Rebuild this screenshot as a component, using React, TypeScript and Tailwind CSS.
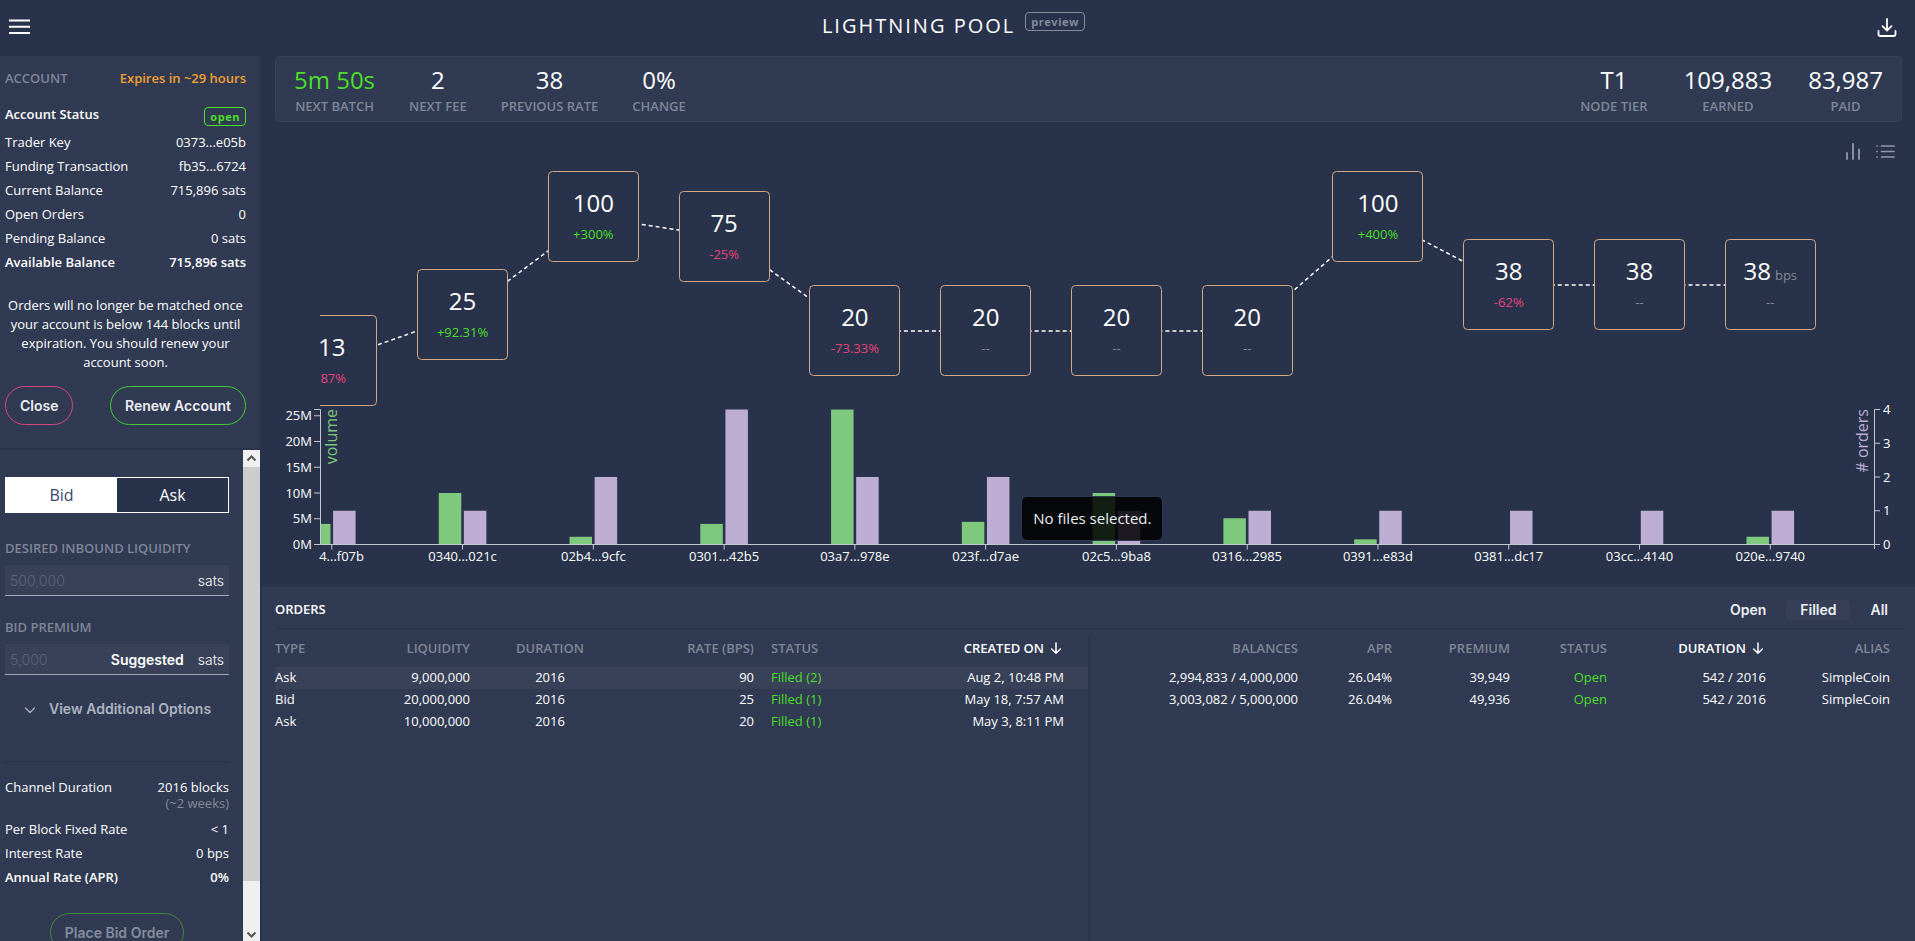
import type { ReactNode } from "react";

const SANS = "font-['Open_Sans','Noto_Sans',sans-serif]";
const WORK = "font-['Inter','Open_Sans',sans-serif]";

type Batch = {
  id: string;
  rate: number;
  pct: string;
  y: number;
  volume: number;
  orders: number;
  unit?: string;
};

const BATCHES: Batch[] = [
  { id: "4...f07b", rate: 13, pct: "87%", y: 361, volume: 4, orders: 1 },
  { id: "0340...021c", rate: 25, pct: "+92.31%", y: 315, volume: 10, orders: 1 },
  { id: "02b4...9cfc", rate: 100, pct: "+300%", y: 217, volume: 1.5, orders: 2 },
  { id: "0301...42b5", rate: 75, pct: "-25%", y: 237, volume: 4, orders: 4 },
  { id: "03a7...978e", rate: 20, pct: "-73.33%", y: 331, volume: 26.2, orders: 2 },
  { id: "023f...d7ae", rate: 20, pct: "--", y: 331, volume: 4.4, orders: 2 },
  { id: "02c5...9ba8", rate: 20, pct: "--", y: 331, volume: 10, orders: 1 },
  { id: "0316...2985", rate: 20, pct: "--", y: 331, volume: 5.1, orders: 1 },
  { id: "0391...e83d", rate: 100, pct: "+400%", y: 217, volume: 1, orders: 1 },
  { id: "0381...dc17", rate: 38, pct: "-62%", y: 285, volume: 0.1, orders: 1 },
  { id: "03cc...4140", rate: 38, pct: "--", y: 285, volume: 0.1, orders: 1 },
  { id: "020e...9740", rate: 38, pct: "--", y: 285, volume: 1.5, orders: 1, unit: "bps" },
];

const LEFT = 320.5;
const RIGHT = 1874.5;
const TOP = 409.5;
const BASE = 544.5;
const tickX = (i: number) => 331.8 + i * 130.77;

function pctColor(b: Batch) {
  if (b.pct === "--") return "#848a99";
  return b.pct.startsWith("+") ? "#4cdf28" : "#e8437a";
}

function BatchChart() {
  return (
    <svg viewBox="260 166 1655 421" className={`block w-full ${SANS}`} role="img" aria-label="Batch rates, volume and orders">
      <defs>
        <clipPath id="plot">
          <rect x={LEFT - 0.5} y="160" width={RIGHT - LEFT} height="440" />
        </clipPath>
      </defs>

      <g clipPath="url(#plot)">
        {BATCHES.slice(1).map((b, i) => (
          <line
            key={b.id}
            x1={tickX(i)}
            y1={BATCHES[i].y}
            x2={tickX(i + 1)}
            y2={b.y}
            stroke="#fff"
            strokeWidth="1.5"
            strokeDasharray="4 3"
          />
        ))}
        {BATCHES.map((b, i) => {
          const x = tickX(i);
          return (
            <g key={b.id}>
              <rect x={Math.floor(x - 45) + 0.5} y={b.y - 45.5} width="90" height="90" rx="4" fill="#28324a" stroke="#d2a984" strokeWidth="1" />
              <text x={x} y={b.y - 5} textAnchor="middle" fontSize="24" fill="#fff">
                {b.rate}
                {b.unit && (
                  <tspan fontSize="13" fill="#848a99" dx="4">
                    {b.unit}
                  </tspan>
                )}
              </text>
              <text x={i === 0 ? 346 : x} y={b.y + 22} textAnchor={i === 0 ? "end" : "middle"} fontSize="13" fill={pctColor(b)}>
                {b.pct}
              </text>
            </g>
          );
        })}
        {BATCHES.map((b, i) => {
          const x = tickX(i);
          const vh = b.volume * 5.15;
          const oh = b.orders * 33.75;
          return (
            <g key={b.id}>
              <rect x={x - 23.8} y={BASE - vh} width="22.5" height={vh} fill="#7fc97f" />
              <rect x={x + 1.3} y={BASE - oh} width="22.5" height={oh} fill="#beaed4" />
            </g>
          );
        })}
      </g>

      <g stroke="#c3c7d1" strokeWidth="1" fill="none">
        <path d={`M314 ${TOP}H${LEFT}V${BASE}H314`} />
        {[5, 10, 15, 20, 25].map((v) => (
          <path key={v} d={`M314 ${BASE - v * 5.15}H${LEFT}`} />
        ))}
        <path d={`M${LEFT} ${BASE}H${RIGHT}V549`} />
        <path d={`M1880 ${TOP}H${RIGHT}V${BASE}H1880`} />
        {[1, 2, 3].map((v) => (
          <path key={v} d={`M${RIGHT} ${BASE - v * 33.75}H1880`} />
        ))}
        {BATCHES.map((b, i) => (
          <path key={b.id} d={`M${tickX(i)} ${BASE}v5`} />
        ))}
      </g>

      <g fontSize="13" fill="#fff">
        {[0, 5, 10, 15, 20, 25].map((v) => (
          <text key={v} x="312" y={BASE + 4.5 - v * 5.15} textAnchor="end">
            {v}M
          </text>
        ))}
        {[0, 1, 2, 3, 4].map((v) => (
          <text key={v} x="1883" y={BASE + 4.5 - v * 33.75}>
            {v}
          </text>
        ))}
        {BATCHES.map((b, i) => (
          <text key={b.id} x={i === 0 ? 364 : tickX(i)} y="561" textAnchor={i === 0 ? "end" : "middle"}>
            {b.id}
          </text>
        ))}
      </g>
      <text transform="translate(337 409) rotate(-90)" textAnchor="end" fontSize="16" fill="#7fc97f">
        volume
      </text>
      <text transform="translate(1868 409) rotate(-90)" textAnchor="end" fontSize="16" fill="#beaed4">
        # orders
      </text>
    </svg>
  );
}

function Stat({ value, label, green }: { value: string; label: string; green?: boolean }) {
  return (
    <div className="text-center">
      <div className={green ? "text-2xl leading-8 text-[#4cdf28]" : "text-2xl leading-8 text-white"}>{value}</div>
      <div className="text-[13px] leading-5 font-semibold text-[#7f8697]">{label}</div>
    </div>
  );
}

function Row({ label, children, bold }: { label: string; children: ReactNode; bold?: boolean }) {
  return (
    <div className={bold ? "flex justify-between leading-6 font-semibold" : "flex justify-between leading-6"}>
      <dt>{label}</dt>
      <dd className="text-right">{children}</dd>
    </div>
  );
}

function SortArrow() {
  return (
    <svg viewBox="0 0 16 16" className="ml-1 inline-block size-4 align-[-3px]" fill="none" stroke="currentColor" strokeWidth="1.5" strokeLinecap="round" strokeLinejoin="round">
      <path d="M8 3v10M3.7 9 8 13.2 12.3 9" />
    </svg>
  );
}

function Sidebar() {
  return (
    <aside className="flex w-[260px] shrink-0 flex-col bg-[#303a52] text-[13px]">
      <section className="border-b-2 border-[#29334b] pt-3 pr-3.5 pb-[23px] pl-[5px]">
        <div className="flex justify-between leading-5 font-semibold">
          <h2 className="text-[#7f8697]">ACCOUNT</h2>
          <span className="text-[#f0a030]">Expires in ~29 hours</span>
        </div>
        <dl className="mt-[15px]">
          <div className="mb-[3px] flex h-6 items-center justify-between font-semibold">
            <dt>Account Status</dt>
            <dd className="mt-0.5 rounded border border-[#4cdf28] px-[5px] text-[11px] leading-[17px] font-bold tracking-wider text-[#4cdf28]">open</dd>
          </div>
          <Row label="Trader Key">0373...e05b</Row>
          <Row label="Funding Transaction">fb35...6724</Row>
          <Row label="Current Balance">715,896 sats</Row>
          <Row label="Open Orders">0</Row>
          <Row label="Pending Balance">0 sats</Row>
          <Row label="Available Balance" bold>
            715,896 sats
          </Row>
        </dl>
        <p className="mt-[22px] text-center leading-[19px]">
          Orders will no longer be matched once your account is below 144 blocks until expiration. You should renew your account soon.
        </p>
        <div className={`mt-3.5 flex justify-between text-sm font-semibold text-[#eceef2] ${WORK}`}>
          <button className="h-[39px] rounded-full border border-[#d9467a] px-3.5">Close</button>
          <button className="h-[39px] rounded-full border border-[#46c83a] px-3.5">Renew Account</button>
        </div>
      </section>

      <section className="flex min-h-0 flex-1">
        <form className="min-w-0 flex-1 overflow-hidden pt-[27px] pr-3.5 pl-[5px]">
          <div className="grid h-9 grid-cols-2 border border-white text-base">
            <button type="button" className="bg-white text-[#384770]">
              Bid
            </button>
            <button type="button" className="bg-[#28324a]">
              Ask
            </button>
          </div>

          <label htmlFor="liquidity" className="mt-[25px] block leading-5 font-semibold text-[#7f8697]">
            DESIRED INBOUND LIQUIDITY
          </label>
          <div className={`mt-[7px] flex h-[31px] items-center border-b border-[#a3a9b8] bg-[#384158] px-[5px] pt-0.5 text-sm ${WORK}`}>
            <input id="liquidity" placeholder="500,000" className="w-0 min-w-0 flex-1 bg-transparent font-light outline-none placeholder:text-[#5b6478]" />
            <span className="font-light">sats</span>
          </div>

          <label htmlFor="premium" className="mt-[21px] block leading-5 font-semibold text-[#7f8697]">
            BID PREMIUM
          </label>
          <div className={`mt-[7px] flex h-[31px] items-center border-b border-[#a3a9b8] bg-[#384158] px-[5px] pt-0.5 text-sm ${WORK}`}>
            <input id="premium" placeholder="5,000" className="w-0 min-w-0 flex-1 bg-transparent font-light outline-none placeholder:text-[#5b6478]" />
            <button type="button" className="mr-3.5 font-semibold">
              Suggested
            </button>
            <span className="font-light">sats</span>
          </div>

          <button type="button" className={`mt-6 flex w-full items-center gap-3 pl-[18px] text-sm leading-5 font-semibold text-[#adb3c0] ${WORK}`}>
            <svg viewBox="0 0 14 14" className="size-3.5" fill="none" stroke="currentColor" strokeWidth="1.3" strokeLinecap="round" strokeLinejoin="round">
              <path d="m2.500 6 4.500 4.500 4.500-4.500" />
            </svg>
            View Additional Options
          </button>

          <dl className="mt-[42px] border-t-2 border-[#2b354c] pt-3">
            <div className="mb-1.5 flex justify-between leading-6">
              <dt>Channel Duration</dt>
              <dd className="text-right">
                2016 blocks
                <span className="-mt-1 block leading-4 text-[#848a99]">(~2 weeks)</span>
              </dd>
            </div>
            <Row label="Per Block Fixed Rate">&lt; 1</Row>
            <Row label="Interest Rate">0 bps</Row>
            <Row label="Annual Rate (APR)" bold>
              0%
            </Row>
          </dl>
          <div className="mt-6 text-center">
            <button type="button" className={`h-[39px] rounded-full border border-[#3f8a3c] px-3.5 text-sm font-semibold text-[#868d9d] ${WORK}`}>
              Place Bid Order
            </button>
          </div>
        </form>
        <div className="flex w-[17px] shrink-0 flex-col bg-[#f0f0f0]" aria-hidden="true">
          <svg viewBox="0 0 17 17" className="size-[17px]" fill="none" stroke="#555" strokeWidth="2">
            <path d="m4.500 10.500 4-4 4 4" />
          </svg>
          <div className="h-[414px] max-h-[85%] bg-[#cdcdcd]" />
          <svg viewBox="0 0 17 17" className="mt-auto size-[17px]" fill="none" stroke="#555" strokeWidth="2">
            <path d="m4.500 8.500 4 4 4-4" />
          </svg>
        </div>
      </section>
    </aside>
  );
}

const ORDERS = [
  ["Ask", "9,000,000", "2016", "90", "Filled (2)", "Aug 2, 10:48 PM"],
  ["Bid", "20,000,000", "2016", "25", "Filled (1)", "May 18, 7:57 AM"],
  ["Ask", "10,000,000", "2016", "20", "Filled (1)", "May 3, 8:11 PM"],
];

const LEASES = [
  ["2,994,833 / 4,000,000", "26.04%", "39,949", "Open", "542 / 2016", "SimpleCoin"],
  ["3,003,082 / 5,000,000", "26.04%", "49,936", "Open", "542 / 2016", "SimpleCoin"],
];

function OrdersPanel() {
  return (
    <section className="ml-0.5 flex flex-1 flex-col bg-[#303a52] pr-2.5 pl-[13px]">
      <div className="flex h-[43px] items-center justify-between border-b-2 border-[#2b354c] pt-1 pr-[3px]">
        <h2 className="text-[13px] font-semibold">ORDERS</h2>
        <div className={`flex gap-1.5 text-sm font-semibold text-[#eceef2] ${WORK}`}>
          <button className="h-5 rounded px-3.5">Open</button>
          <button className="h-5 rounded bg-[#363f57] px-3.5">Filled</button>
          <button className="h-5 rounded px-3.5">All</button>
        </div>
      </div>
      <div className="grid flex-1 grid-cols-2 text-[13px]">
        <div className="mt-1.5 border-r-2 border-[#2b354c]">
          <table className="w-full table-fixed">
            <colgroup>
              <col className="w-[60px]" />
              <col className="w-[135px]" />
              <col className="w-[160px]" />
              <col className="w-[124px]" />
              <col className="w-[114px]" />
              <col className="w-[220px]" />
            </colgroup>
            <thead>
              <tr className="h-[31px] align-top leading-6 text-[#7f8697]">
                <th className="text-left font-semibold">TYPE</th>
                <th className="text-right font-semibold">LIQUIDITY</th>
                <th className="text-center font-semibold">DURATION</th>
                <th className="text-right font-semibold">RATE (BPS)</th>
                <th className="pl-[17px] text-left font-semibold">STATUS</th>
                <th className="pr-6 text-right font-semibold text-white">
                  CREATED ON
                  <SortArrow />
                </th>
              </tr>
            </thead>
            <tbody>
              {ORDERS.map((o, i) => (
                <tr key={i} className={i === 0 ? "h-[22px] bg-[#384158]" : "h-[22px]"}>
                  <td>{o[0]}</td>
                  <td className="text-right">{o[1]}</td>
                  <td className="text-center">{o[2]}</td>
                  <td className="text-right">{o[3]}</td>
                  <td className="pl-[17px] text-[#4cdf28]">{o[4]}</td>
                  <td className="pr-6 text-right">{o[5]}</td>
                </tr>
              ))}
            </tbody>
          </table>
        </div>
        <div className="mt-1.5 pr-[18px]">
          <table className="w-full table-fixed text-right">
            <colgroup>
              <col className="w-[208px]" />
              <col className="w-[94px]" />
              <col className="w-[118px]" />
              <col className="w-[97px]" />
              <col className="w-[159px]" />
              <col className="w-[124px]" />
            </colgroup>
            <thead>
              <tr className="h-[31px] align-top leading-6 text-[#7f8697]">
                <th className="font-semibold">BALANCES</th>
                <th className="font-semibold">APR</th>
                <th className="font-semibold">PREMIUM</th>
                <th className="font-semibold">STATUS</th>
                <th className="font-semibold text-white">
                  DURATION
                  <SortArrow />
                </th>
                <th className="font-semibold">ALIAS</th>
              </tr>
            </thead>
            <tbody>
              {LEASES.map((l, i) => (
                <tr key={i} className="h-[22px]">
                  <td>{l[0]}</td>
                  <td>{l[1]}</td>
                  <td>{l[2]}</td>
                  <td className="text-[#4cdf28]">{l[3]}</td>
                  <td>{l[4]}</td>
                  <td>{l[5]}</td>
                </tr>
              ))}
            </tbody>
          </table>
        </div>
      </div>
    </section>
  );
}

export default function App() {
  return (
    <div className={`flex h-screen flex-col overflow-hidden bg-[#28324a] text-white ${SANS}`}>
      <header className="grid h-14 shrink-0 grid-cols-[1fr_auto_1fr] items-center pr-4 pb-1 pl-2">
        <button aria-label="Menu" className="justify-self-start">
          <svg viewBox="0 0 24 24" className="size-6" stroke="#fff" strokeWidth="2">
            <path d="M1 6.500h21M1 12.700h21M1 19h21" />
          </svg>
        </button>
        <div className="flex items-start gap-2.5">
          <h1 className="text-xl leading-7 tracking-[2px]">LIGHTNING POOL</h1>
          <span className="rounded border border-[#848a99] px-[5px] text-[11px] leading-[17px] font-bold tracking-wider text-[#848a99]">preview</span>
        </div>
        <button aria-label="Download" className="justify-self-end">
          <svg viewBox="0 0 24 24" className="size-6" fill="none" stroke="#fff" strokeWidth="1.800" strokeLinecap="round" strokeLinejoin="round">
            <path d="M12 5v11.500M7.500 12.200l4.500 4.500 4.500-4.500M3.500 17v3a2 2 0 0 0 2 2h13a2 2 0 0 0 2-2v-3" />
          </svg>
        </button>
      </header>

      <div className="flex min-h-0 flex-1">
        <Sidebar />
        <main className="flex min-w-0 flex-1 flex-col">
          <div className="mr-[13px] ml-[15px] flex h-[66px] shrink-0 items-center justify-between rounded border border-[#384159] bg-[#303a52] px-[18px] pt-0.5">
            <div className="flex gap-[34px]">
              <Stat value="5m 50s" label="NEXT BATCH" green />
              <Stat value="2" label="NEXT FEE" />
              <Stat value="38" label="PREVIOUS RATE" />
              <Stat value="0%" label="CHANGE" />
            </div>
            <div className="flex gap-9">
              <Stat value="T1" label="NODE TIER" />
              <Stat value="109,883" label="EARNED" />
              <Stat value="83,987" label="PAID" />
            </div>
          </div>

          <div className="flex h-11 shrink-0 items-center justify-end gap-3 pt-4 pr-5 text-[#9299a8]">
            <button aria-label="Chart view">
              <svg viewBox="0 0 20 20" className="size-5" stroke="currentColor" strokeWidth="1.800" strokeLinecap="round">
                <path d="M4 11v6M10 2v15M16 7.500v9.500" />
              </svg>
            </button>
            <button aria-label="List view">
              <svg viewBox="0 0 20 20" className="size-5" stroke="currentColor" strokeWidth="1.700" strokeLinecap="round">
                <path d="M6.500 4h12.500M6.500 9.500h12.500M6.500 15h12.500M2 4h.1M2 9.500h.1M2 15h.1" />
              </svg>
            </button>
          </div>

          <div className="relative shrink-0">
            <BatchChart />
            <div
              role="tooltip"
              className="absolute top-[78.5%] left-[46%] rounded-md border border-[#2c3850] bg-black/85 px-[11px] text-[15px] leading-[43px] whitespace-nowrap text-[#eceef2]"
            >
              No files selected.
            </div>
          </div>

          <OrdersPanel />
        </main>
      </div>
    </div>
  );
}
